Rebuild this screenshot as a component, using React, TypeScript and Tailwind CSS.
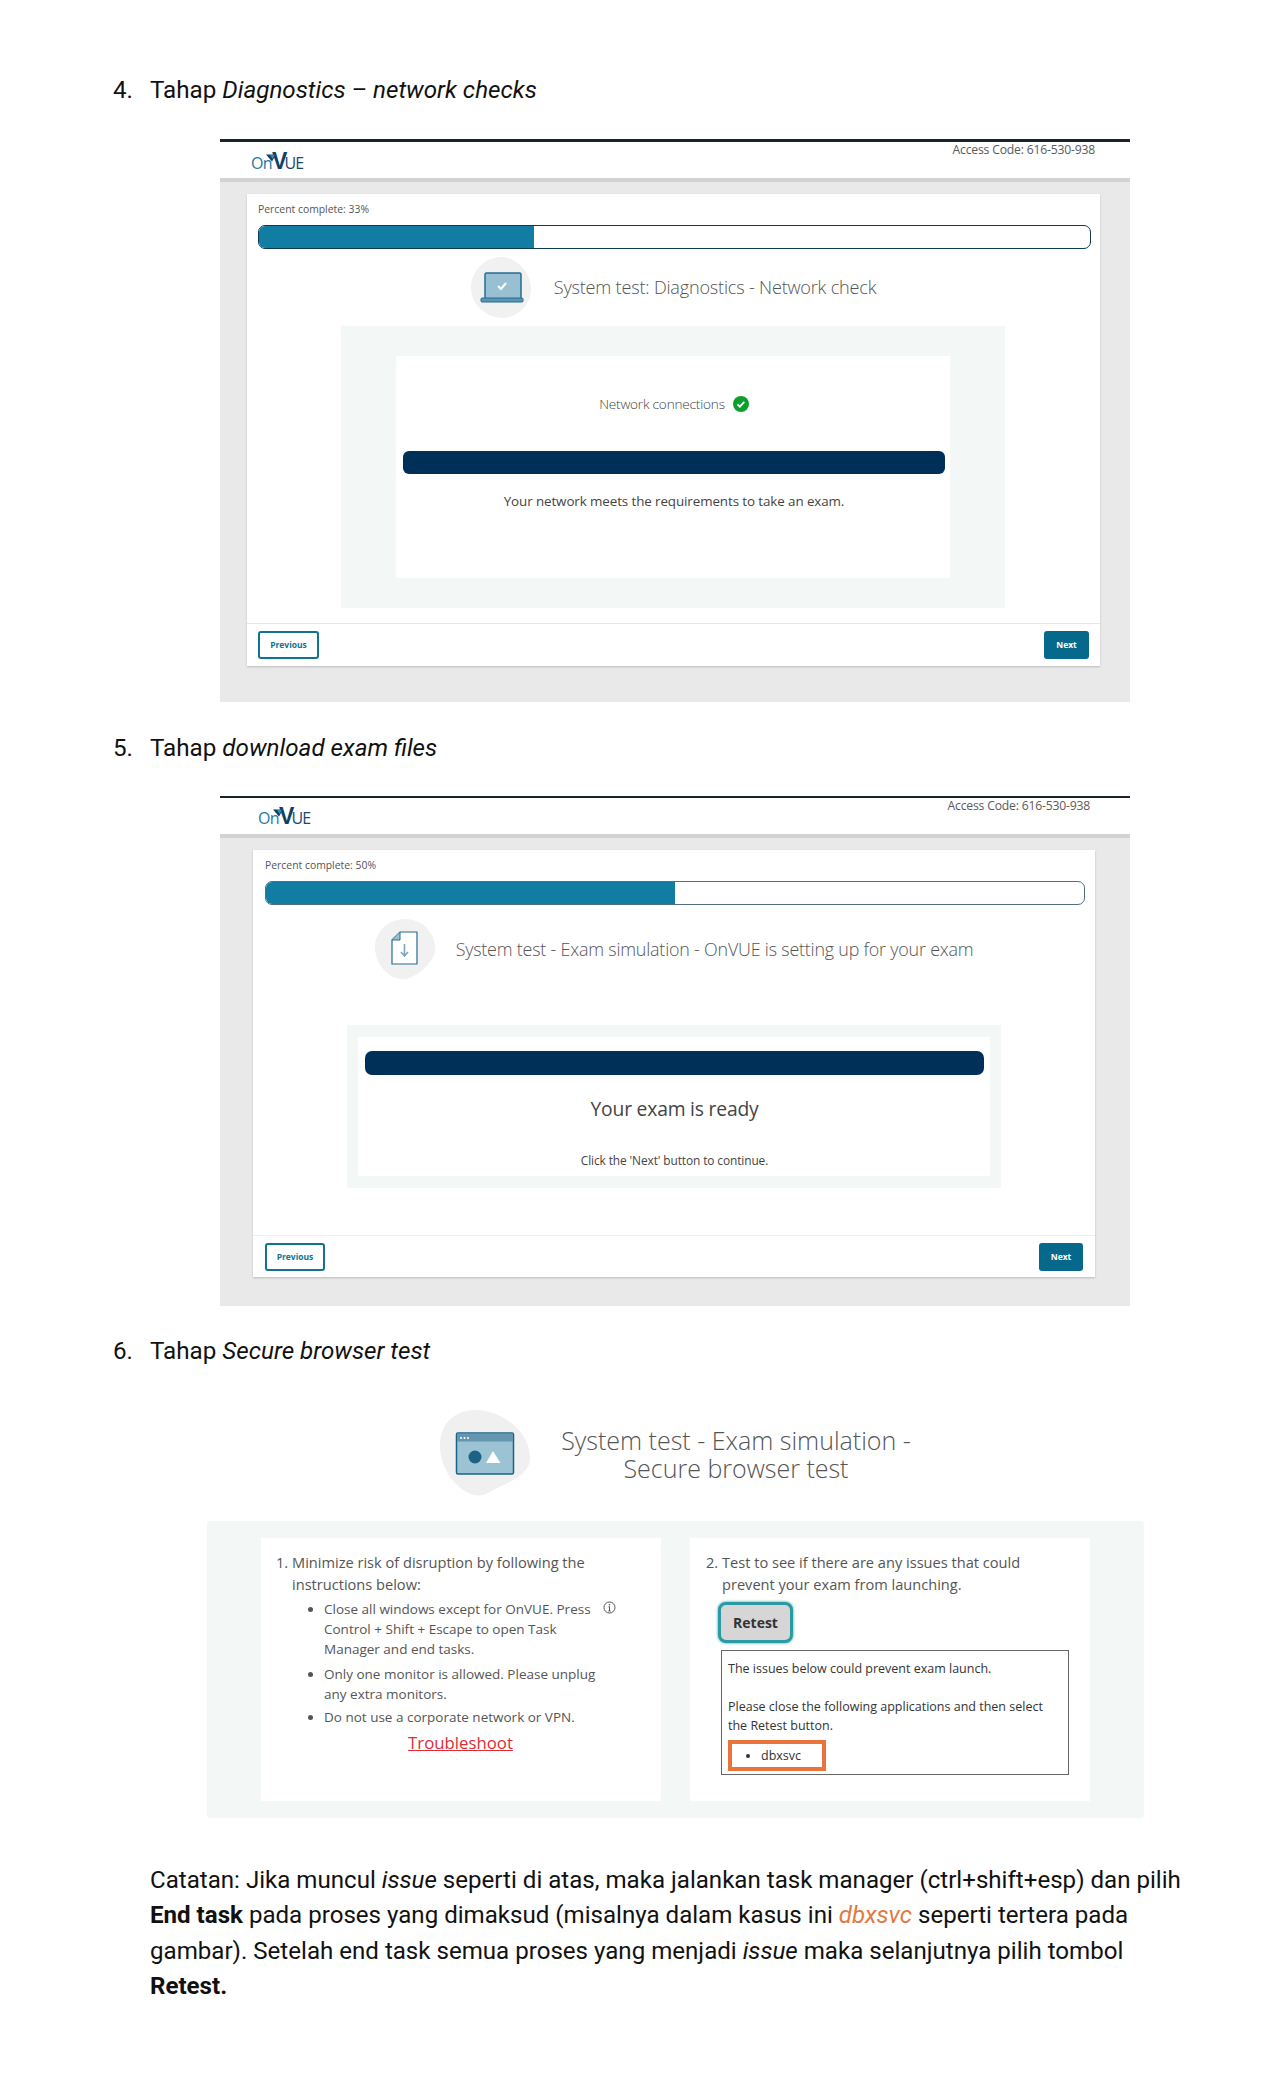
const sans = "font-['Open_Sans',sans-serif]";

function Logo({ className }: { className: string }) {
  return (
    <div className={`relative flex items-end leading-none ${className}`}>
      <span className="text-[16px] tracking-[-0.6px] text-[#1c7a9c]">On</span>
      <span className="text-[23px] leading-[20px] font-bold text-[#0f3f66] font-['Liberation_Sans',sans-serif]">V</span>
      <span className="ml-[-3px] text-[16px] tracking-[-0.8px] text-[#174a70]">UE</span>
      <svg className="absolute left-[15px] top-[1px]" width="11" height="8" viewBox="0 0 11 8">
        <path d="M0 0.5h10l-4 7z" fill="#0f3f66" />
        <path d="M4 1h5l-2.5 4z" fill="#2d8fa8" />
      </svg>
    </div>
  );
}

function Buttons({ prevW, nextW }: { prevW: string; nextW: string }) {
  return (
    <div className="flex justify-between items-start">
      <div className={`h-[28px] ${prevW} flex items-center justify-center rounded-[3px] border-2 border-[#0f7391] text-[8.5px] font-bold text-[#0f7391]`}>
        Previous
      </div>
      <div className={`h-[28px] ${nextW} flex items-center justify-center rounded-[3px] bg-[#06698c] text-[8.5px] font-bold text-white`}>
        Next
      </div>
    </div>
  );
}

function LaptopIcon() {
  return (
    <svg width="60" height="61" viewBox="0 0 60 61">
      <path d="M30 0C46 0 60 16 60 32C60 48 46 61 32 61C16 61 0 48 0 31C0 14 14 0 30 0Z" fill="#f1f1f1" />
      <rect x="14" y="16" width="36" height="26" rx="1.500" fill="#98c0d2" stroke="#256e94" strokeWidth="1.500" />
      <rect x="10" y="41" width="42" height="4" rx="1" fill="#5d94b1" stroke="#256e94" strokeWidth="1" />
      <path d="M27 29l3 3 5-6" fill="none" stroke="white" strokeWidth="2" />
    </svg>
  );
}

function FileIcon() {
  return (
    <svg width="60" height="60" viewBox="0 0 60 60">
      <path d="M30 0C48 0 60 14 60 30C60 42 42 60 28 60C12 60 0 44 0 28C0 12 14 0 30 0Z" fill="#f1f1f1" />
      <path d="M17 21L25 13H42V45H17Z" fill="white" stroke="#256e94" strokeWidth="1.200" />
      <path d="M17 21H25V13" fill="#98c0d2" stroke="#256e94" strokeWidth="1" />
      <path d="M29.500 25V36M26 33l3.500 4 3.500-4" fill="none" stroke="#7fa5ba" strokeWidth="1.600" />
    </svg>
  );
}

function BrowserIcon() {
  return (
    <svg width="90" height="88" viewBox="0 0 90 88">
      <path d="M36 0C60 0 90 20 90 48C90 68 62 74 46 84C28 92 0 66 0 36C0 12 16 0 36 0Z" fill="#f0f0f0" />
      <rect x="16.500" y="23" width="57" height="41" rx="1.500" fill="#9cc3d3" stroke="#1d6285" strokeWidth="1.500" />
      <rect x="17" y="23.500" width="56" height="8" fill="#6596af" />
      <circle cx="21" cy="28" r="1" fill="white" />
      <circle cx="24.500" cy="28" r="1" fill="white" />
      <circle cx="28" cy="28" r="1" fill="white" />
      <circle cx="35" cy="47" r="6.500" fill="#1d6285" />
      <path d="M46 53L53 41L60.500 53Z" fill="white" />
    </svg>
  );
}

function Heading({ n, className, children }: { n: string; className: string; children: React.ReactNode }) {
  return (
    <div className={`flex h-[35px] items-center pt-[2px] pl-[113px] text-[24.200px] text-[#111] font-['Roboto',sans-serif] ${className}`}>
      <span className="w-[37px]">{n}</span>
      <span>{children}</span>
    </div>
  );
}

export default function App() {
  return (
    <div className={`w-[1275px] min-h-[2100px] bg-white overflow-hidden ${sans}`}>
      <Heading n="4." className="mt-[72px]">
        Tahap <em>Diagnostics – network checks</em>
      </Heading>

      {/* network check */}
      <div className="ml-[220px] mt-[32px] w-[910px] h-[563px] bg-[#e9e9e9] flex flex-col">
        <div className="h-[39px] shrink-0 bg-white border-t-[3px] border-t-[#1b2430] flex justify-between pl-[31px] pr-[35px]">
          <Logo className="mt-[11px] h-[18px]" />
          <div className="text-[12.200px] tracking-[-0.2px] leading-[16px] text-[#5a5a5a]">Access Code: 616-530-938</div>
        </div>
        <div className="h-[4px] shrink-0 bg-[#d2d2d2]" />
        <div className="mt-[12px] ml-[27px] w-[853px] h-[472px] bg-white shadow-[0_1px_2px_rgba(0,0,0,0.2)] flex flex-col">
          <div className="pl-[11px] pr-[9px] pt-[8px]">
            <div className="h-[15px] text-[10.400px] leading-[15px] text-[#555]">Percent complete: 33%</div>
            <div className="mt-[8px] h-[24px] rounded-[7px] border border-[#0e3a55] overflow-hidden">
              <div className="h-full w-[275px] bg-[#127da3]" />
            </div>
          </div>
          <div className="mt-[8px] flex items-center justify-center gap-[23px]">
            <LaptopIcon />
            <div className="text-[18.100px] font-light text-[#555] tracking-[-0.2px]">System test: Diagnostics - Network check</div>
          </div>
          <div className="mt-[8px] ml-[94px] w-[664px] h-[282px] bg-[#f3f8f6] px-[55px] py-[30px]">
            <div className="h-[222px] bg-white flex flex-col items-center pl-[7px] pr-[5px]">
              <div className="mt-[37px] h-[22px] flex items-center gap-[8px] text-[13.600px] font-light text-[#444] tracking-[-0.2px]">
                Network connections
                <svg width="16" height="16" viewBox="0 0 16 16">
                  <circle cx="8" cy="8" r="8" fill="#0ba02c" />
                  <path d="M4.500 8.300l2.300 2.300 4.500-4.800" fill="none" stroke="white" strokeWidth="1.800" />
                </svg>
              </div>
              <div className="mt-[36px] w-full h-[23px] rounded-[6px] bg-[#003057]" />
              <div className="mt-[16px] text-[13.400px] leading-[22px] text-[#444] tracking-[-0.1px]">Your network meets the requirements to take an exam.</div>
            </div>
          </div>
          <div className="mt-[15px] border-t border-[#e6e6e6] pt-[7px] px-[11px]">
            <Buttons prevW="w-[61px]" nextW="w-[45px]" />
          </div>
        </div>
      </div>

      <Heading n="5." className="mt-[28px]">
        Tahap <em>download exam files</em>
      </Heading>

      {/* exam files */}
      <div className="ml-[220px] mt-[31px] w-[910px] h-[510px] bg-[#e9e9e9] flex flex-col">
        <div className="h-[38px] shrink-0 bg-white border-t-[2px] border-t-[#1b2430] flex justify-between pl-[38px] pr-[40px]">
          <Logo className="mt-[10px] h-[18px]" />
          <div className="text-[12.200px] tracking-[-0.2px] leading-[16px] text-[#5a5a5a]">Access Code: 616-530-938</div>
        </div>
        <div className="h-[4px] shrink-0 bg-[#d2d2d2]" />
        <div className="mt-[12px] ml-[33px] w-[842px] h-[427px] bg-white shadow-[0_1px_2px_rgba(0,0,0,0.2)] flex flex-col">
          <div className="pl-[12px] pr-[10px] pt-[8px]">
            <div className="h-[15px] text-[10.400px] leading-[15px] text-[#555]">Percent complete: 50%</div>
            <div className="mt-[8px] h-[24px] rounded-[7px] border border-[#51707f] overflow-hidden">
              <div className="h-full w-[409px] bg-[#127da3]" />
            </div>
          </div>
          <div className="mt-[14px] flex items-center justify-center gap-[21px]">
            <FileIcon />
            <div className="text-[17.900px] font-light text-[#555] tracking-[-0.2px]">System test - Exam simulation - OnVUE is setting up for your exam</div>
          </div>
          <div className="mt-[46px] ml-[94px] w-[654px] h-[163px] bg-[#f3f8f6] px-[11px] py-[12px]">
            <div className="h-[139px] bg-white flex flex-col items-center pl-[7px] pr-[6px]">
              <div className="mt-[14px] w-full h-[24px] rounded-[7px] bg-[#003057]" />
              <div className="mt-[20px] text-[19.300px] leading-[28px] text-[#444] tracking-[-0.2px]">Your exam is ready</div>
              <div className="mt-[29px] text-[11.900px] leading-[16px] text-[#444] tracking-[-0.1px]">Click the 'Next' button to continue.</div>
            </div>
          </div>
          <div className="mt-[47px] border-t border-[#efefef] pt-[7px] px-[12px]">
            <Buttons prevW="w-[60px]" nextW="w-[44px]" />
          </div>
        </div>
      </div>

      <Heading n="6." className="mt-[27px]">
        Tahap <em>Secure browser test</em>
      </Heading>

      {/* secure browser test */}
      <div className="mt-[42px] ml-[207px] w-[937px] flex flex-col">
        <div className="flex items-center justify-center gap-[31px]">
          <BrowserIcon />
          <div className="text-center text-[25px] leading-[28px] font-light text-[#555] whitespace-nowrap">
            System test - Exam simulation -<br />
            Secure browser test
          </div>
        </div>
        <div className="mt-[23px] h-[297px] rounded-[3px] bg-[#f3f8f6] px-[54px] py-[17px] flex gap-[29px]">
          <div className="relative w-[400px] h-[263px] bg-white pl-[15px] pt-[14px] text-[#555]">
            <div className="flex text-[14.600px] leading-[21.500px]">
              <span className="w-[16px]">1.</span>
              <span className="w-[320px]">Minimize risk of disruption by following the instructions below:</span>
            </div>
            <ul className="mt-[4px] ml-[48px] w-[285px] list-disc text-[13.500px] leading-[20px]">
              <li>Close all windows except for OnVUE. Press Control + Shift + Escape to open Task Manager and end tasks.</li>
              <li className="mt-[5px]">Only one monitor is allowed. Please unplug any extra monitors.</li>
              <li className="mt-[3px]">Do not use a corporate network or VPN.</li>
            </ul>
            <div className="mt-[5px] w-[369px] text-center text-[16.800px] leading-[22px] text-[#e02b35] underline">Troubleshoot</div>
            <svg className="absolute left-[342px] top-[63px]" width="13" height="13" viewBox="0 0 13 13">
              <circle cx="6.500" cy="6.500" r="5.500" fill="none" stroke="#555" strokeWidth="1" />
              <path d="M6.500 5.500V10M5.500 5.800h1M5.400 10h2.200" fill="none" stroke="#555" strokeWidth="1" />
              <circle cx="6.500" cy="3.700" r="0.800" fill="#555" />
            </svg>
          </div>
          <div className="w-[400px] h-[263px] bg-white pl-[16px] pt-[14px] text-[#555]">
            <div className="flex text-[14.600px] leading-[21.500px]">
              <span className="w-[16px]">2.</span>
              <span className="w-[320px]">Test to see if there are any issues that could prevent your exam from launching.</span>
            </div>
            <div className="mt-[7px] ml-[12px] w-[75px] h-[41px] rounded-[8px] border-[3px] border-[#2a9ba3] bg-[#d6d6d6] shadow-[0_0_3px_#2a9ba3] flex items-center justify-center text-[14px] font-bold text-[#333]">
              Retest
            </div>
            <div className="mt-[7px] ml-[15px] w-[348px] h-[125px] border-[1.500px] border-[#666] pl-[6px] pt-[8px] text-[12.500px] leading-[19px] text-[#333]">
              <div>The issues below could prevent exam launch.</div>
              <div className="mt-[19px] w-[325px]">Please close the following applications and then select the Retest button.</div>
              <div className="mt-[5px] w-[98px] h-[31px] border-[4px] border-[#e8743b] flex items-center">
                <ul className="ml-[29px] list-disc">
                  <li>dbxsvc</li>
                </ul>
              </div>
            </div>
          </div>
        </div>
      </div>

      {/* note */}
      <div className="mt-[45px] ml-[150px] w-[1040px] text-[24.100px] leading-[35.300px] text-[#111] font-['Roboto',sans-serif]">
        Catatan: Jika muncul <em>issue</em> seperti di atas, maka jalankan task manager (ctrl+shift+esp) dan pilih{" "}
        <strong>End task</strong> pada proses yang dimaksud (misalnya dalam kasus ini{" "}
        <em className="text-[#e2793f]">dbxsvc</em> seperti tertera pada gambar). Setelah end task semua proses yang menjadi{" "}
        <em>issue</em> maka selanjutnya pilih tombol <strong>Retest.</strong>
      </div>
    </div>
  );
}
